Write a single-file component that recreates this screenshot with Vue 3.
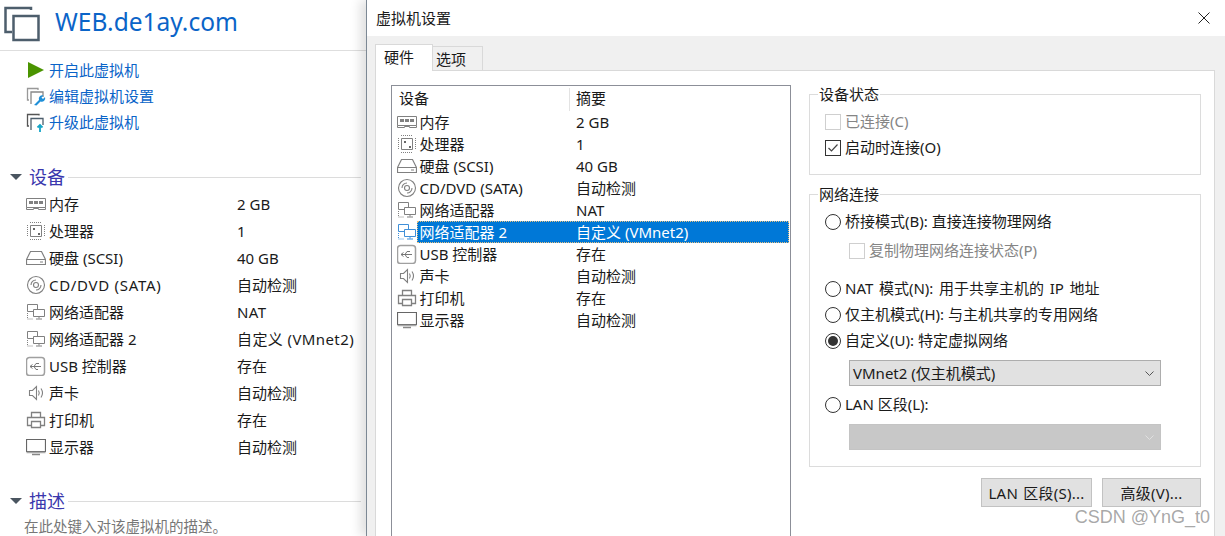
<script setup>
const G = '#808080'
const icons = {
  mem: [
    { d: 'M.5 4.500h19v9H.5z M.5 13.500v2h7v-1h5v1h7v-2' },
    { d: 'M3 7h4v3H3z M8 7h4v3H8z M13 7h4v3h-4z', fill: G, stroke: 'none' }
  ],
  cpu: [
    { d: 'M4.500 4.500h11v11h-11z' },
    { d: 'M4 1.500h12 M4 18.500h12 M1.500 4v12 M18.500 4v12', dash: '1 1' },
    { d: 'M7 7h2v2H7z M12 12h2v2h-2z', fill: '#666', stroke: 'none' }
  ],
  hdd: [{ d: 'M4.500 3.500h11l4 8v5H.5v-5z M.5 11.500h19 M14 14h3', width: 1.200 }],
  cd: [
    { d: 'M18.500 10a8.500 8.500 0 1 1-17 0a8.500 8.500 0 1 1 17 0z M12.500 10a2.500 2.500 0 1 1-5 0a2.500 2.500 0 1 1 5 0z M5 10a5 5 0 0 1 5-5 M15 10a5 5 0 0 1-5 5', width: 1.100 }
  ],
  net: [
    { d: 'M1.500 2.500h10v7h-10z', fill: '#fff' },
    { d: 'M1.500 11v6h6', dash: '1 1' },
    { d: 'M7.500 7.500h11v7h-11z M13 14.500v2 M10 17h6', fill: '#fff' }
  ],
  usb: [
    { d: 'M3.500 1.500h12a3 3 0 0 1 3 3v12a3 3 0 0 1-3 3h-12a3 3 0 0 1-3-3v-12a3 3 0 0 1 3-3z', width: 1.500, color: '#a0a0a0' },
    { d: 'M4 10.500h11 M4 10.500l2.500-2 M4 10.500l2.500 2 M8 10.500l2-3h3 M8 10.500l2 3h2', color: '#777' }
  ],
  spk: [{ d: 'M3.500 7.500h3l4-4v13l-4-4h-3z M12.500 7.500q1.500 2.500 0 5 M15 5.500q3 4.500 0 9', width: 1.100 }],
  prn: [{ d: 'M5.500 7V2.500h9V7 M5.500 15.500h-4v-8h17v8h-4 M5.500 11.500h9v6h-9z', width: 1.300 }],
  mon: [
    { d: 'M.5 2.500h19v12H.5z', color: '#666', width: 1.200 },
    { d: 'M.5 15.500h19', color: '#aaa', width: 1.500 },
    { d: 'M6 17.500h8', color: '#888', width: 1.500 }
  ]
}

const devices = [
  { icon: 'mem', name: '内存', value: '2 GB' },
  { icon: 'cpu', name: '处理器', value: '1' },
  { icon: 'hdd', name: '硬盘 (SCSI)', value: '40 GB' },
  { icon: 'cd', name: 'CD/DVD (SATA)', value: '自动检测', wideName: true },
  { icon: 'net', name: '网络适配器', value: 'NAT', wideValue: true },
  { icon: 'net', name: '网络适配器 2', value: '自定义 (VMnet2)', selected: true, wideValue: true },
  { icon: 'usb', name: 'USB 控制器', value: '存在' },
  { icon: 'spk', name: '声卡', value: '自动检测' },
  { icon: 'prn', name: '打印机', value: '存在' },
  { icon: 'mon', name: '显示器', value: '自动检测' }
]
const SEL = '#3f8fd8'
</script>

<template>
  <div class="page">
    <aside class="vm">
      <header class="vm-head">
        <svg class="vm-logo" width="44" height="44" viewBox="0 0 44 44" fill="none" stroke="#4d5e6c" stroke-width="2.500">
          <path d="M31 10V8H5.500v24H12" />
          <path d="M13.500 16h25v24h-25z" />
        </svg>
        <h1 class="vm-title">WEB.de1ay.com</h1>
      </header>

      <nav class="actions">
        <a class="action">
          <svg width="20" height="20" viewBox="0 0 20 20"><path d="M2 2l16 8-16 8z" fill="#4a9400" /></svg>
          开启此虚拟机
        </a>
        <a class="action">
          <svg width="20" height="20" viewBox="0 0 20 20" fill="none">
            <path d="M12 4V2.500H1.500V14H3" stroke="#999" stroke-width="1.300" />
            <path d="M5 18V6h12v5" stroke="#888" stroke-width="1.300" />
            <path d="M8 19l5-5a3.500 3.500 0 0 1 4.500-4.500l-2 2 1.500 1.500 2-2a3.500 3.500 0 0 1-4.500 4.500l-4 4z" fill="#1f8fd8" />
          </svg>
          编辑虚拟机设置
        </a>
        <a class="action">
          <svg width="20" height="20" viewBox="0 0 20 20" fill="none">
            <path d="M13 3.500V2.500H1.500V14H3" stroke="#555" stroke-width="1.300" />
            <path d="M5 18V6.500h12V13" stroke="#4d5e6c" stroke-width="1.300" />
            <path d="M14 20v-7 M11.500 15.500l2.500-2.500 2.500 2.500" stroke="#15a5c8" stroke-width="1.800" />
          </svg>
          升级此虚拟机
        </a>
      </nav>

      <section class="sec sec-devices">
        <div class="sec-head"><i class="caret"></i><h2>设备</h2><span class="sec-line"></span></div>
        <div class="vm-rows">
          <div v-for="d in devices" :key="d.name" class="vm-row">
            <svg width="20" height="20" viewBox="0 0 20 20" fill="none">
              <path v-for="(p, i) in icons[d.icon]" :key="i" :d="p.d" :fill="p.fill || 'none'"
                :stroke="p.stroke || p.color || G" :stroke-width="p.width || 1" :stroke-dasharray="p.dash" />
            </svg>
            <span class="vm-name" :class="{ wide: d.wideName }">{{ d.name }}</span>
            <span :class="{ wide2: d.wideValue }">{{ d.value }}</span>
          </div>
        </div>
      </section>

      <section class="sec sec-desc">
        <div class="sec-head"><i class="caret"></i><h2>描述</h2><span class="sec-line"></span></div>
        <p class="desc">在此处键入对该虚拟机的描述。</p>
      </section>
    </aside>

    <main class="dlg">
      <div class="dlg-title">
        <span>虚拟机设置</span>
        <svg width="12" height="12" viewBox="0 0 12 12" fill="none" stroke="#222"><path d="M.5.500l11 11M11.500.500l-11 11" /></svg>
      </div>
      <div class="dlg-body">
        <div class="tabs">
          <div class="tab on">硬件</div>
          <div class="tab">选项</div>
        </div>
        <div class="pane">
          <div class="list">
            <div class="list-head">
              <span class="lh lh-a">设备</span>
              <span class="lh lh-b">摘要</span>
            </div>
            <div v-for="d in devices" :key="d.name" class="list-row" :class="{ sel: d.selected }">
              <svg width="20" height="20" viewBox="0 0 20 20" fill="none">
                <path v-for="(p, i) in icons[d.icon]" :key="i" :d="p.d" :fill="p.fill || 'none'"
                  :stroke="d.selected ? SEL : (p.stroke || p.color || G)" :stroke-width="p.width || 1" :stroke-dasharray="p.dash" />
              </svg>
              <div class="list-cells">
                <span class="list-name">{{ d.name }}</span>
                <span>{{ d.value }}</span>
              </div>
            </div>
          </div>

          <div class="side">
            <fieldset class="group g1">
              <legend>设备状态</legend>
              <label class="opt off"><i class="chk off"></i>已连接(C)</label>
              <label class="opt">
                <i class="chk">
                  <svg width="14" height="14" viewBox="0 0 14 14" fill="none" stroke="#444" stroke-width="1.200"><path d="M2.500 7l3 3 6-6.500" /></svg>
                </i>启动时连接(O)
              </label>
            </fieldset>

            <fieldset class="group g2">
              <legend>网络连接</legend>
              <label class="opt"><i class="rad"></i>桥接模式(B): 直接连接物理网络</label>
              <label class="opt off sub"><i class="chk off"></i>复制物理网络连接状态(P)</label>
              <label class="opt nat"><i class="rad"></i>NAT 模式(N): 用于共享主机的 IP 地址</label>
              <label class="opt"><i class="rad"></i>仅主机模式(H): 与主机共享的专用网络</label>
              <label class="opt"><i class="rad on"></i>自定义(U): 特定虚拟网络</label>
              <div class="sel-box">
                <span>VMnet2 (仅主机模式)</span>
                <svg width="9" height="5" viewBox="0 0 9 5" fill="none" stroke="#555"><path d="M.5.500l4 4 4-4" /></svg>
              </div>
              <label class="opt lan"><i class="rad"></i>LAN 区段(L):</label>
              <div class="sel-box dis">
                <span></span>
                <svg width="9" height="5" viewBox="0 0 9 5" fill="none" stroke="#e0e0e0"><path d="M.5.500l4 4 4-4" /></svg>
              </div>
            </fieldset>

            <div class="btns">
              <button class="btn b1">LAN 区段(S)...</button>
              <button class="btn b2">高级(V)...</button>
            </div>
          </div>
        </div>
      </div>
    </main>

    <div class="mark">CSDN @YnG_t0</div>
  </div>
</template>

<style>
html, body { margin: 0; overflow: hidden; }
</style>

<style scoped>
.page {
  position: relative;
  display: flex;
  width: 1225px;
  height: 536px;
  overflow: hidden;
  background: #fff;
  color: #1a1a1a;
  font: 15px/20px "Noto Sans", "Noto Sans CJK SC", sans-serif;
}
.vm { flex: 0 0 366px; width: 366px; }
.vm-head {
  display: flex;
  align-items: flex-start;
  height: 50px;
  border-bottom: 1px solid #dedede;
}
.vm-logo { flex: none; margin-right: 11px; }
.vm-title { margin: 6px 0 0; font-size: 24.500px; font-weight: 400; line-height: 32px; color: #0a64c8; }
.actions { padding: 6px 0 0 26px; }
.action { display: flex; align-items: center; gap: 3px; height: 26px; color: #0a64c8; }
.sec-devices { margin-top: 30px; }
.sec-desc { margin-top: 29px; }
.sec-head { display: flex; align-items: center; height: 24px; padding: 0 5px 0 10px; }
.caret { width: 0; height: 0; margin-right: 7px; border: 6px solid transparent; border-top-color: #4a5560; border-bottom: 0; }
.sec-head h2 { margin: 0; font-size: 18px; font-weight: 400; color: #3a37ad; line-height: 24px; }
.sec-line { flex: 1; height: 1px; margin-left: 3px; background: #dcdcdc; }
.vm-rows { margin-top: 1px; }
.vm-row { display: flex; align-items: center; height: 27px; padding-left: 26px; }
.vm-name { width: 188px; margin-left: 3px; }
.wide { letter-spacing: .7px; }
.wide2 { letter-spacing: .4px; }
.desc { margin: 3px 0 0 24px; font-size: 14.500px; color: #777; }

.dlg {
  flex: 1;
  display: flex;
  flex-direction: column;
  z-index: 1;
  border-left: 1px solid #7c8894;
  background: #f0f0f0;
  box-shadow: -6px 0 10px rgba(0, 0, 0, .12);
}
.dlg-title {
  display: flex;
  align-items: center;
  justify-content: space-between;
  flex: 0 0 36px;
  padding: 0 15px 0 9px;
  background: #fff;
}
.dlg-body { flex: 1; padding: 0 10px 0 8px; }
.tabs { display: flex; align-items: flex-end; height: 34px; }
.tab {
  box-sizing: border-box;
  width: 50px;
  height: 24px;
  padding-left: 3px;
  line-height: 24px;
  border: 1px solid #d9d9d9;
  border-width: 1px 1px 0 0;
}
.tab.on {
  position: relative;
  z-index: 1;
  width: 58px;
  height: 27px;
  margin-bottom: -1px;
  padding-left: 8px;
  background: #fff;
  border-width: 1px 1px 0 1px;
}
.pane {
  display: flex;
  gap: 18px;
  height: 500px;
  padding: 14px 13px 0 15px;
  border: 1px solid #d9d9d9;
  background: #fff;
}
.list {
  flex: 0 0 398px;
  height: 480px;
  border: 1px solid #8c8f98;
}
.list-head { position: relative; height: 25px; }
.lh { position: absolute; top: 2px; }
.lh-a { left: 7px; }
.lh-b { left: 184px; }
.lh-b::before { content: ""; position: absolute; left: -7px; top: 0; width: 1px; height: 23px; background: #e3e3e3; }
.list-row { display: flex; align-items: center; height: 22px; padding-left: 5px; }
.list-cells { display: flex; align-items: center; flex: 1; height: 22px; margin-right: 1px; padding-left: 2.500px; }
.list-name { width: 156.500px; }
.sel .list-cells {
  box-sizing: border-box;
  background: #0078d7;
  color: #fff;
  outline: 1px dotted #e8c080;
  outline-offset: -1px;
}
.side { flex: 1; }
.group { margin: 0; padding: 6px 0 13px 15px; border: 1px solid #dcdcdc; min-width: 0; }
.g2 { margin-top: 10px; padding-bottom: 16px; }
legend { margin-left: -7px; padding: 0 1px; line-height: 18px; }
.opt { box-sizing: border-box; display: flex; align-items: center; gap: 4px; height: 26px; padding-bottom: 2px; }
.opt.off { color: #858585; }
.chk {
  box-sizing: border-box;
  display: flex;
  width: 16px;
  height: 16px;
  margin-top: 2px;
  border: 1px solid #333;
  background: #fff;
}
.chk.off { border-color: #cfcfcf; }
.rad {
  box-sizing: border-box;
  display: flex;
  align-items: center;
  justify-content: center;
  width: 16px;
  height: 16px;
  margin-top: 2px;
  border: 1px solid #333;
  border-radius: 50%;
}
.rad.on::after { content: ""; width: 10px; height: 10px; border-radius: 50%; background: #333; }
.sub { margin: 3px 0 0 24px; }
.nat { margin-top: 12px; word-spacing: 1.750px; }
.lan { margin-top: 6px; }
.sel-box {
  box-sizing: border-box;
  display: flex;
  align-items: center;
  justify-content: space-between;
  width: 312px;
  height: 26px;
  margin: 6px 0 0 24px;
  padding: 0 6px 0 3px;
  border: 1px solid #adadad;
  background: #e1e1e1;
}
.sel-box.dis { border-color: #c4c4c4; background: #c8c8c8; }
.btns { display: flex; justify-content: flex-end; gap: 10px; margin-top: 11px; }
.btn {
  box-sizing: border-box;
  height: 29px;
  padding: 0;
  border: 1px solid #c2c2c2;
  background: #e1e1e1;
  color: #1a1a1a;
  font: inherit;
  letter-spacing: .25px;
}
.b1 { width: 111px; word-spacing: 1px; }
.b2 { width: 99px; }
.mark {
  position: absolute;
  z-index: 2;
  right: 15px;
  top: 507px;
  color: rgba(130, 130, 130, .7);
  font: 18px/20px "Liberation Sans", sans-serif;
}
</style>
